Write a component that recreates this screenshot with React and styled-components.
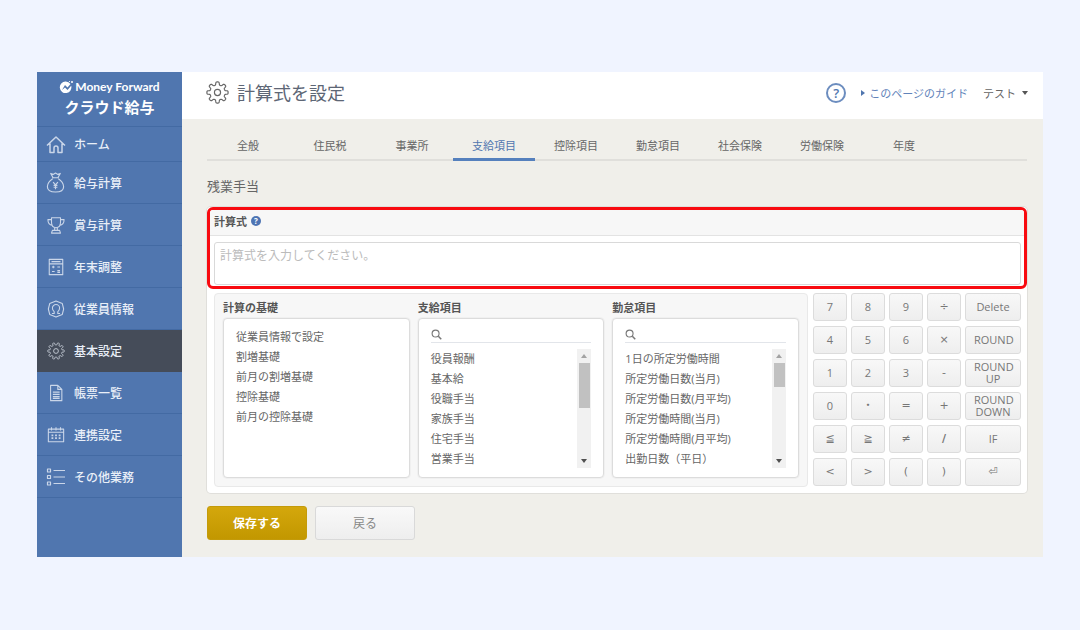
import React from 'react'
import styled, { createGlobalStyle } from 'styled-components'

const JP_FONT = `"Open Sans", "Noto Sans CJK JP", sans-serif`

const payItems = ['役員報酬', '基本給', '役職手当', '家族手当', '住宅手当', '営業手当']
const attendanceItems = [
    '1日の所定労働時間',
    '所定労働日数(当月)',
    '所定労働日数(月平均)',
    '所定労働時間(当月)',
    '所定労働時間(月平均)',
    '出勤日数（平日）'
]
const baseItems = ['従業員情報で設定', '割増基礎', '前月の割増基礎', '控除基礎', '前月の控除基礎']
const tabs = ['全般', '住民税', '事業所', '支給項目', '控除項目', '勤怠項目', '社会保険', '労働保険', '年度']
const keys = [
    '7', '8', '9', '÷', 'Delete',
    '4', '5', '6', '×', 'ROUND',
    '1', '2', '3', '-', 'ROUND UP',
    '0', '・', '=', '+', 'ROUND DOWN',
    '≦', '≧', '≠', '/', 'IF',
    '<', '>', '(', ')', '⏎'
]

// outline of a gear with rounded teeth, centred on 12,12
const gearPath = (teeth) => {
    const points = []
    const count = teeth * 20
    for (let i = 0; i < count; i++) {
        const angle = (i / count) * Math.PI * 2
        const r = 9.5 + 1.6 * Math.tanh(2.5 * Math.cos(teeth * angle))
        points.push(`${(12 + r * Math.cos(angle)).toFixed(2)} ${(12 + r * Math.sin(angle)).toFixed(2)}`)
    }
    return `M${points.join('L')}Z`
}

const GearIcon = ({ size, teeth = 8 }) => (
    <Icon viewBox="0 0 24 24" $size={size}>
        <path d={gearPath(teeth)} />
        <circle cx="12" cy="12" r="3.2" />
    </Icon>
)

const HomeIcon = () => (
    <Icon viewBox="0 0 20 20" $size={20}>
        <path d="M1 11.500 10 3l9 8.500M4 9.500V18.500h4V14a2 2 0 0 1 4 0v4.500h4V9.500" strokeWidth="1.5" />
    </Icon>
)

const BagIcon = () => (
    <Icon viewBox="0 0 20 22" $size={21}>
        <path d="M7.500 6 5 1.500l2.500 1L10 1l2.500 1.500 2.500-1L12.500 6M6.500 6h7M7 7c-3 2-5.500 5-5.500 8.500S4 21 10 21s8.500-2 8.500-5.500S16 9 13 7" />
        <path d="m7.500 10.500 2.500 3 2.500-3M10 13.500V18M8 14h4M8 16h4" />
    </Icon>
)

const TrophyIcon = () => (
    <Icon viewBox="0 0 20 20" $size={18}>
        <path d="M5 2h10v5c0 4-2 6-5 6S5 11 5 7zM5 4H1c0 4 1.500 6 5 6.500M15 4h4c0 4-1.500 6-5 6.500M8.500 13v3M11.500 13v3M6 16h8l1 3H5z" />
    </Icon>
)

const CalculatorIcon = () => (
    <Icon viewBox="0 0 20 20" $size={18}>
        <path d="M2.500 1.500h15v17h-15zM2.500 6.500h15M5 4h10M5.500 10h3M7 8.500v3M11.500 10h3M5.500 15h3M11.500 14h3M11.500 16h3" />
    </Icon>
)

const PersonIcon = () => (
    <Icon viewBox="0 0 20 20" $size={18}>
        <path d="m10 1 7 3 1.500 6-1.500 6-7 3-7-3-1.500-6L3 4zM5.500 15H8v-2c-1.500-1-2-2.500-2-4a4 4 0 0 1 8 0c0 1.500-.5 3-2 4v2h2.500" />
    </Icon>
)

const DocumentIcon = () => (
    <Icon viewBox="0 0 20 20" $size={18}>
        <path d="M4 1.500h8l4.500 4.500v12.500H4zM12 1.500V6h4.500M6.500 9h7.500M6.500 11.500h7.500M6.500 14h7.500M6.500 16h7.500" />
    </Icon>
)

const CalendarIcon = () => (
    <Icon viewBox="0 0 20 20" $size={18}>
        <path d="M1.500 3.500h17v14h-17zM1.500 7h17M5 1.500V5M10 1.500V5M15 1.500V5" />
        <path d="M5 10.500h2M9 10.500h2M13 10.500h2M5 13.500h2M9 13.500h2M13 13.500h2" strokeWidth="2" />
    </Icon>
)

const ListIcon = () => (
    <Icon viewBox="0 0 20 20" $size={20}>
        <path d="M1.500 2h3v3h-3zM1.500 8.500h3v3h-3zM1.500 15h3v3h-3zM7.500 3.500H19M7.500 10H19M7.500 16.500H19" />
    </Icon>
)

const SearchIcon = () => (
    <Icon viewBox="0 0 12 12" $size={11}>
        <circle cx="5" cy="5" r="3.8" />
        <path d="m8 8 3.200 3.200" strokeWidth="1.6" />
    </Icon>
)

const BrandMark = () => (
    <svg width="15" height="14" viewBox="0 0 15 14" aria-hidden="true">
        <path d="M6.500 1.500a5.800 5.800 0 1 0 5.700 4.300L8.500 10 6 7.500 3 10l3-5 2.500 2.500 3-3.500a5.800 5.800 0 0 0-5-2.500z" fill="#fff" />
        <circle cx="13" cy="2" r="1" fill="#fff" />
        <circle cx="10.500" cy="1.500" r=".6" fill="#fff" />
    </svg>
)

const menu = [
    { label: 'ホーム', icon: <HomeIcon />, short: true },
    { label: '給与計算', icon: <BagIcon /> },
    { label: '賞与計算', icon: <TrophyIcon /> },
    { label: '年末調整', icon: <CalculatorIcon /> },
    { label: '従業員情報', icon: <PersonIcon /> },
    { label: '基本設定', icon: <GearIcon size={18} teeth={10} />, active: true },
    { label: '帳票一覧', icon: <DocumentIcon /> },
    { label: '連携設定', icon: <CalendarIcon /> },
    { label: 'その他業務', icon: <ListIcon /> }
]

const ItemPicker = ({ id, title, items, thumb }) => (
    <PickerColumn>
        <PickerTitle id={id}>{title}</PickerTitle>
        <PickerBox>
            {thumb && (
                <SearchField>
                    <SearchIcon />
                    <SearchInput type="text" aria-label={`${title}を検索`} />
                </SearchField>
            )}
            <PickerBody>
                <ItemList aria-labelledby={id}>
                    {items.map(item => <li key={item}><ItemButton type="button">{item}</ItemButton></li>)}
                </ItemList>
                {thumb && (
                    <ScrollTrack aria-hidden="true">
                        <Arrow $up $color="#a3a3a3" />
                        <ScrollThumb $height={thumb} />
                        <Arrow $color="#505050" />
                    </ScrollTrack>
                )}
            </PickerBody>
        </PickerBox>
    </PickerColumn>
)

const App = () => {
    return (
        <Page>
            <GlobalStyle />
            <Window>
                <Sidebar>
                    <Brand href="#">
                        <BrandName><BrandMark />Money Forward</BrandName>
                        <ProductName>クラウド給与</ProductName>
                    </Brand>
                    <nav>
                        {menu.map(({ label, icon, short, active }) => (
                            <MenuLink href="#" key={label} $short={short} $active={active}>
                                <MenuIcon>{icon}</MenuIcon>
                                {label}
                            </MenuLink>
                        ))}
                    </nav>
                </Sidebar>
                <Main>
                    <Header>
                        <GearIcon size={23} />
                        <PageTitle>計算式を設定</PageTitle>
                        <HelpButton type="button" aria-label="ヘルプ">?</HelpButton>
                        <GuideLink href="#"><GuideArrow />このページのガイド</GuideLink>
                        <UserButton type="button">テスト<Arrow $color="#555" /></UserButton>
                    </Header>
                    <Content>
                        <Tabs>
                            {tabs.map(tab => <Tab href="#" key={tab} $active={tab === '支給項目'}>{tab}</Tab>)}
                        </Tabs>
                        <SectionTitle>残業手当</SectionTitle>
                        <Panel>
                            <Formula>
                                <FormulaHead>
                                    <label htmlFor="formula">計算式</label>
                                    <Hint>?</Hint>
                                </FormulaHead>
                                <FormulaInput id="formula" placeholder="計算式を入力してください。" />
                            </Formula>
                            <Tools>
                                <Pickers>
                                    <ItemPicker id="base" title="計算の基礎" items={baseItems} />
                                    <ItemPicker id="pay" title="支給項目" items={payItems} thumb={45} />
                                    <ItemPicker id="attendance" title="勤怠項目" items={attendanceItems} thumb={24} />
                                </Pickers>
                                <Keypad>
                                    {keys.map(key => (
                                        <Key type="button" key={key} $symbol={!/\w/.test(key)} $bold={key === '/'}>{key}</Key>
                                    ))}
                                </Keypad>
                            </Tools>
                        </Panel>
                        <Actions>
                            <SaveButton type="button">保存する</SaveButton>
                            <BackButton type="button">戻る</BackButton>
                        </Actions>
                    </Content>
                </Main>
            </Window>
        </Page>
    )
}

export default App

const GlobalStyle = createGlobalStyle`
    * {
        box-sizing: border-box;
    }

    body {
        margin: 0;
        background: #f0f4ff;
        color: #666;
        font-family: ${JP_FONT};
        font-size: 11px;
    }

    button, input, textarea {
        font-family: inherit;
        font-size: inherit;
        color: inherit;
    }

    a {
        text-decoration: none;
        color: inherit;
    }
`;

const Page = styled.div`
    padding: 72px 37px;
`;

const Window = styled.div`
    display: flex;
`;

const Icon = styled.svg`
    width: ${({ $size }) => $size}px;
    height: ${({ $size }) => $size}px;
    flex: none;
    fill: none;
    stroke: currentColor;
    stroke-width: 1.2;
    stroke-linejoin: round;
`;

const Sidebar = styled.aside`
    width: 145px;
    flex: none;
    background: #5076af;
    color: #e9eff8;
`;

const Brand = styled.a`
    height: 55px;
    padding-top: 6px;
    display: flex;
    flex-direction: column;
    align-items: center;
    color: white;
    border-bottom: 1px solid #436aa3;
`;

const BrandName = styled.span`
    display: flex;
    align-items: center;
    gap: 1px;
    font-family: Lato, sans-serif;
    font-size: 12px;
    font-weight: bold;
    line-height: 18px;
    white-space: nowrap;
`;

const ProductName = styled.span`
    font-size: 15px;
    font-weight: bold;
    line-height: 22px;
`;

const MenuLink = styled.a`
    height: ${({ $short }) => $short ? 35 : 42}px;
    display: flex;
    align-items: center;
    gap: 8px;
    padding-left: 8px;
    font-size: 12px;
    font-weight: 500;
    border-bottom: 1px solid ${({ $active }) => $active ? '#454c59' : '#436aa3'};
    background: ${({ $active }) => $active ? '#454c59' : 'transparent'};
`;

const MenuIcon = styled.span`
    width: 21px;
    display: flex;
    justify-content: center;
    opacity: 0.8;
`;

const Main = styled.main`
    flex: 1;
    min-width: 0;
    background: #f0efea;
`;

const Header = styled.header`
    height: 47px;
    padding: 0 15px 6px 24px;
    display: flex;
    align-items: center;
    background: white;
`;

const PageTitle = styled.h1`
    margin: 0 auto 0 8px;
    color: #5d6675;
    font-size: 18px;
    font-weight: normal;
    line-height: 26px;
`;

const HelpButton = styled.button`
    width: 20px;
    height: 20px;
    padding: 0;
    border: 2px solid #6c8dbf;
    border-radius: 50%;
    background: white;
    color: #5076af;
    font-size: 13px;
    font-weight: 600;
    line-height: 16px;
`;

const GuideLink = styled.a`
    display: flex;
    align-items: center;
    gap: 4px;
    margin: 0 15px;
    color: #6284ba;
`;

const GuideArrow = styled.i`
    border: 3px solid transparent;
    border-left: 4px solid #5076af;
    border-right: 0;
`;

const UserButton = styled.button`
    display: flex;
    align-items: center;
    gap: 6px;
    padding: 0;
    border: 0;
    background: none;
`;

const Arrow = styled.i`
    border: 3px solid transparent;
    border-${({ $up }) => $up ? 'bottom' : 'top'}: 4px solid ${({ $color }) => $color};
    border-${({ $up }) => $up ? 'top' : 'bottom'}: 0;
`;

const Content = styled.div`
    padding: 12px 16px 17px 25px;
`;

const Tabs = styled.nav`
    display: flex;
    height: 30px;
    border-bottom: 2px solid #e0dfdb;
`;

const Tab = styled.a`
    width: 10%;
    height: 30px;
    padding-top: 7px;
    line-height: 16px;
    text-align: center;
    color: ${({ $active }) => $active ? '#5076af' : '#666'};
    border-bottom: ${({ $active }) => $active ? '3px solid #5580bd' : '0'};
`;

const SectionTitle = styled.h2`
    margin: 15px 0 11px;
    font-size: 13px;
    font-weight: normal;
    line-height: 20px;
`;

const Panel = styled.section`
    background: white;
    border-radius: 4px;
    box-shadow: 0 0 0 1px #e0dfdb;
`;

const Formula = styled.div`
    height: 82px;
    border: 3px solid #f80b10;
    border-radius: 6px;
    overflow: hidden;
`;

const FormulaHead = styled.div`
    height: 26px;
    padding: 0 4px 4px;
    display: flex;
    align-items: center;
    gap: 4px;
    background: #f7f7f7;
    border-bottom: 1px solid #e3e3e3;
    color: #555;
    font-weight: bold;
`;

const Hint = styled.span`
    width: 10px;
    height: 10px;
    border-radius: 50%;
    background: #4d74b3;
    color: white;
    font-size: 8px;
    line-height: 10px;
    text-align: center;
`;

const FormulaInput = styled.textarea`
    display: block;
    width: calc(100% - 7px);
    height: 43px;
    margin: 6px 3px 0 4px;
    padding: 5px;
    border: 1px solid #d9d9d9;
    border-radius: 3px;
    resize: none;
    font-size: 12px;
    line-height: 16px;

    &::placeholder {
        color: #bbb;
    }
`;

const Tools = styled.div`
    display: flex;
    gap: 5px;
    padding: 4px 6px 6px 7px;
`;

const Pickers = styled.div`
    flex: 1;
    min-width: 0;
    display: flex;
    gap: 8px;
    padding: 4px 8px 8px;
    background: #f7f7f7;
    border: 1px solid #e9e9e9;
    border-radius: 4px;
`;

const PickerColumn = styled.div`
    flex: 1;
    min-width: 0;
`;

const PickerTitle = styled.h3`
    margin: 0;
    color: #555;
    font-size: 11px;
    font-weight: bold;
    line-height: 20px;
`;

const PickerBox = styled.div`
    height: 160px;
    padding: 8px 12px;
    background: white;
    border: 1px solid #dcdcdc;
    border-radius: 4px;
    box-shadow: 0 0 0 1px #f0f0f0;
`;

const SearchField = styled.div`
    display: flex;
    align-items: center;
    height: 16px;
    margin-bottom: 6px;
    border-bottom: 1px solid #e2e5ea;
    color: #777;
`;

const SearchInput = styled.input`
    flex: 1;
    min-width: 0;
    height: 14px;
    padding: 0 4px;
    border: 0;
    outline: 0;
    background: none;
`;

const PickerBody = styled.div`
    display: flex;
    justify-content: space-between;
`;

const ItemList = styled.ul`
    margin: 0;
    padding: 0;
    list-style: none;
`;

const ItemButton = styled.button`
    display: block;
    height: 20px;
    padding: 0;
    border: 0;
    background: none;
    line-height: 18px;
    white-space: nowrap;
`;

const ScrollTrack = styled.div`
    width: 14px;
    height: 119px;
    padding: 5px 0;
    display: flex;
    flex-direction: column;
    align-items: center;
    gap: 5px;
    background: #f1f1f1;

    & > :last-child {
        margin-top: auto;
    }
`;

const ScrollThumb = styled.div`
    width: 11px;
    height: ${({ $height }) => $height}px;
    background: #c1c1c1;
`;

const Keypad = styled.div`
    display: grid;
    grid-template-columns: repeat(4, 34px) 56px;
    grid-auto-rows: 28px;
    gap: 5px 4px;
`;

const Key = styled.button`
    padding: 0 8px;
    border: 1px solid #dcdcdc;
    border-radius: 3px;
    background: linear-gradient(#f8f8f8, #eeeeee);
    color: #777;
    font-family: ${({ $symbol }) => $symbol ? '"DejaVu Sans", "Noto Sans CJK JP", sans-serif' : JP_FONT};
    font-size: 11px;
    font-weight: ${({ $bold }) => $bold ? 'bold' : 'normal'};
    line-height: 12px;
`;

const Actions = styled.div`
    display: flex;
    gap: 8px;
    margin-top: 13px;
`;

const ActionButton = styled.button`
    width: 100px;
    height: 34px;
    padding: 0;
    border-radius: 3px;
    font-size: 12px;
`;

const SaveButton = styled(ActionButton)`
    border: 1px solid #c49b0a;
    background: linear-gradient(#d4a70c, #c29700);
    color: white;
    font-weight: bold;
`;

const BackButton = styled(ActionButton)`
    border: 1px solid #d9d9d9;
    background: linear-gradient(#f9f9f9, #eeeeee);
    color: #888;
`;
